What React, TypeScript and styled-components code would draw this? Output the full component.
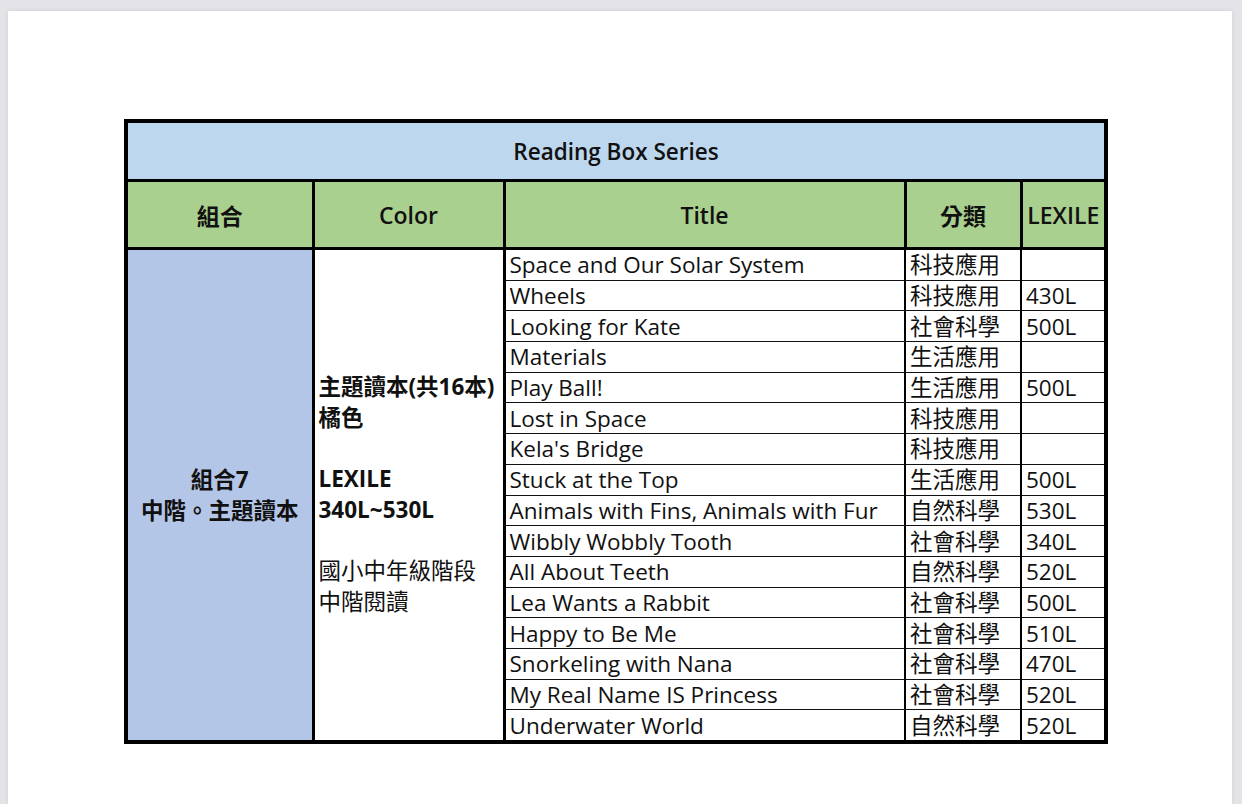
import styled, { createGlobalStyle } from 'styled-components';

const GlobalStyle = createGlobalStyle`
  html, body {
    margin: 0;
    padding: 0;
    background: #e4e4e8;
  }
  body {
    font-family: "Open Sans", "Noto Sans CJK TC", sans-serif;
  }
`;

const Page = styled.div`
  margin: 11px 10px 0 8px;
  height: 793px;
  box-sizing: border-box;
  padding: 108px 0 0 116px;
  background: #fff;
  box-shadow: 0 0 4px rgba(0, 0, 0, 0.1);
`;

const Sheet = styled.table`
  border-collapse: collapse;
  table-layout: fixed;
  width: 982px;
  border: 4px solid #000;
  color: #111;
  font-size: 22.5px;
`;

const Col = styled.col<{ $w: number }>`
  width: ${(p) => p.$w}px;
`;

const TitleCell = styled.th`
  height: 56px;
  padding: 0;
  background: #bdd7ee;
  border: 3px solid #000;
  font-weight: 600;
  font-size: 22.5px;
  text-align: center;
`;

const HeadCell = styled.th`
  height: 65px;
  padding: 0;
  background: #a9d08e;
  border: 3px solid #000;
  font-weight: 600;
  font-size: 23px;
  text-align: center;
`;

const GroupCell = styled.td`
  padding: 0;
  background: #b4c6e7;
  border: 3px solid #000;
  text-align: center;
  vertical-align: middle;
  font-weight: 700;
  line-height: 31px;
`;

const ColorCell = styled.td`
  padding: 0 0 0 4px;
  border: 3px solid #000;
  vertical-align: middle;
  white-space: nowrap;
`;

const Line = styled.div<{ $bold?: boolean }>`
  height: 30.7px;
  line-height: 30.7px;
  font-weight: ${(p) => (p.$bold ? 700 : 400)};
`;

const DataCell = styled.td<{ $thick?: boolean }>`
  height: 29.7px;
  padding: 0 4px;
  line-height: 29px;
  border-top: 1.5px solid #111;
  border-bottom: 1.5px solid #111;
  border-left: ${(p) => (p.$thick ? '3px' : '2px')} solid #000;
  border-right: 2px solid #000;
  white-space: nowrap;
  overflow: hidden;
`;

const books = [
  ['Space and Our Solar System', '科技應用', ''],
  ['Wheels', '科技應用', '430L'],
  ['Looking for Kate', '社會科學', '500L'],
  ['Materials', '生活應用', ''],
  ['Play Ball!', '生活應用', '500L'],
  ['Lost in Space', '科技應用', ''],
  ["Kela's Bridge", '科技應用', ''],
  ['Stuck at the Top', '生活應用', '500L'],
  ['Animals with Fins, Animals with Fur', '自然科學', '530L'],
  ['Wibbly Wobbly Tooth', '社會科學', '340L'],
  ['All About Teeth', '自然科學', '520L'],
  ['Lea Wants a Rabbit', '社會科學', '500L'],
  ['Happy to Be Me', '社會科學', '510L'],
  ['Snorkeling with Nana', '社會科學', '470L'],
  ['My Real Name IS Princess', '社會科學', '520L'],
  ['Underwater World', '自然科學', '520L'],
];

const App = () => (
  <>
    <GlobalStyle />
    <Page>
      <Sheet>
        <colgroup>
          <Col $w={187} />
          <Col $w={191} />
          <Col $w={401} />
          <Col $w={116} />
          <Col $w={85} />
        </colgroup>
        <thead>
          <tr>
            <TitleCell colSpan={5}>Reading Box Series</TitleCell>
          </tr>
          <tr>
            <HeadCell>組合</HeadCell>
            <HeadCell>Color</HeadCell>
            <HeadCell>Title</HeadCell>
            <HeadCell>分類</HeadCell>
            <HeadCell>LEXILE</HeadCell>
          </tr>
        </thead>
        <tbody>
          {books.map(([title, kind, lexile], i) => (
            <tr key={title}>
              {i === 0 && (
                <>
                  <GroupCell rowSpan={books.length}>
                    組合7
                    <br />
                    中階。主題讀本
                  </GroupCell>
                  <ColorCell rowSpan={books.length}>
                    <Line $bold>主題讀本(共16本)</Line>
                    <Line $bold>橘色</Line>
                    <Line />
                    <Line $bold>LEXILE</Line>
                    <Line $bold>340L~530L</Line>
                    <Line />
                    <Line>國小中年級階段</Line>
                    <Line>中階閱讀</Line>
                  </ColorCell>
                </>
              )}
              <DataCell $thick>{title}</DataCell>
              <DataCell>{kind}</DataCell>
              <DataCell>{lexile}</DataCell>
            </tr>
          ))}
        </tbody>
      </Sheet>
    </Page>
  </>
);

export default App;
